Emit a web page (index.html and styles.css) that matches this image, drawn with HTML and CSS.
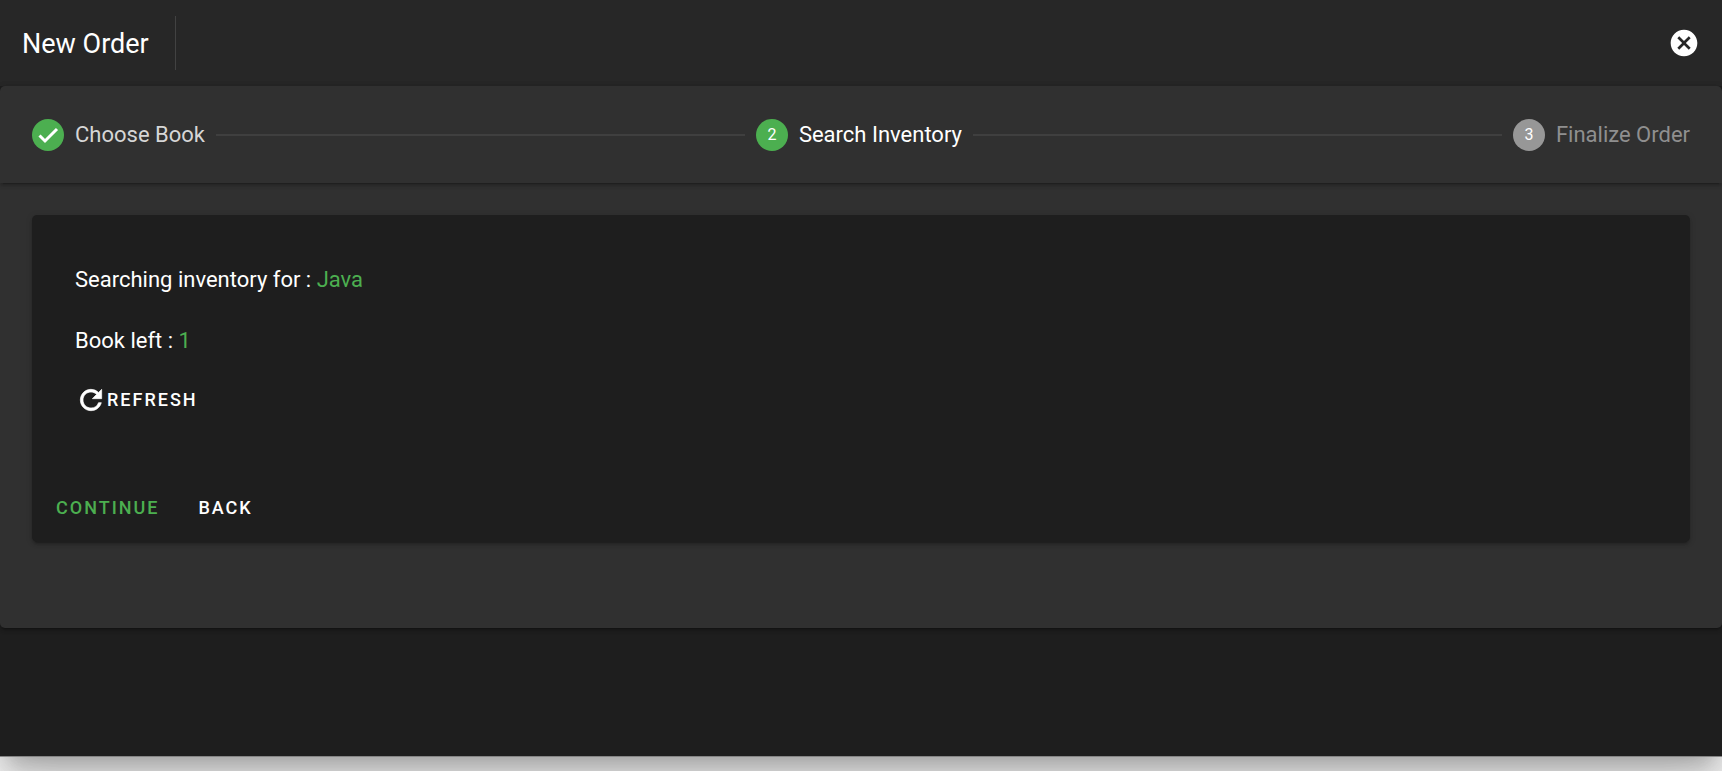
FILE: index.html
```html
<!DOCTYPE html>
<html lang="en">
<head>
<meta charset="utf-8">
<meta name="viewport" content="width=device-width, initial-scale=1">
<title>New Order</title>
<link rel="stylesheet" href="styles.css">
</head>
<body>
<div class="page">
<main class="dialog">
  <header class="toolbar">
    <h1 class="toolbar-title">New Order</h1>
    <span class="toolbar-divider"></span>
    <button class="close-button" type="button" aria-label="Close">
      <svg class="icon" viewBox="0 0 24 24" aria-hidden="true"><path d="M12 2C6.470 2 2 6.470 2 12s4.470 10 10 10 10-4.470 10-10S17.530 2 12 2zm5 13.590L15.590 17 12 13.410 8.410 17 7 15.590 10.590 12 7 8.410 8.410 7 12 10.590 15.590 7 17 8.410 13.410 12 17 15.590z"/></svg>
    </button>
  </header>
  <section class="stepper">
    <ol class="steps">
      <li class="step step-complete">
        <span class="step-badge"><svg class="check" viewBox="0 0 24 24" aria-hidden="true"><path d="M3.500 12.500l5.500 5.500L21 6"/></svg></span>
        <span>Choose Book</span>
      </li>
      <li class="step-line" role="presentation"></li>
      <li class="step step-active" aria-current="step">
        <span class="step-badge">2</span>
        <span>Search Inventory</span>
      </li>
      <li class="step-line" role="presentation"></li>
      <li class="step step-pending">
        <span class="step-badge">3</span>
        <span>Finalize Order</span>
      </li>
    </ol>
    <div class="step-content">
      <article class="card">
        <div class="card-body">
          <p class="card-line">Searching inventory for : <span class="value">Java</span></p>
          <p class="card-line">Book left : <span class="value">1</span></p>
          <button class="text-button refresh-button" type="button">
            <svg class="icon refresh-icon" viewBox="0 0 24 24" aria-hidden="true"><path d="M17.650 6.350A7.958 7.958 0 0 0 12 4c-4.420 0-7.990 3.580-7.990 8s3.570 8 7.990 8c3.730 0 6.840-2.550 7.730-6h-2.080A5.990 5.990 0 0 1 12 18c-3.310 0-6-2.690-6-6s2.690-6 6-6c1.660 0 3.140.690 4.220 1.780L13 11h7V4l-2.350 2.350z"/></svg>
            REFRESH
          </button>
        </div>
        <div class="card-actions">
          <button class="text-button continue-button" type="button">CONTINUE</button>
          <button class="text-button" type="button">BACK</button>
        </div>
      </article>
    </div>
  </section>
</main>
</div>
</body>
</html>
```

FILE: styles.css
```css
* {
  box-sizing: border-box;
}

body {
  margin: 0;
  background: #fff;
  color: #fff;
  font-family: Roboto, "Liberation Sans", sans-serif;
  font-size: 22px;
  line-height: 32px;
}

button {
  margin: 0;
  padding: 0;
  border: 0;
  background: none;
  color: inherit;
  font: inherit;
  cursor: pointer;
}

.page {
  display: flex;
  flex-direction: column;
  min-height: 100vh;
  padding-bottom: 14px;
  background: #fff;
  overflow: hidden;
}

.dialog {
  flex: 1;
  border-bottom: 1px solid #858585;
  background: #1e1e1e;
  box-shadow: 0 15px 20px -9px rgba(0, 0, 0, 0.2), 0 32px 51px 4px rgba(0, 0, 0, 0.14), 0 12px 62px 11px rgba(0, 0, 0, 0.12);
}

.toolbar {
  display: flex;
  align-items: center;
  height: 86px;
  padding: 0 22px;
  background: #272727;
}

.toolbar-title {
  margin: 0;
  padding-top: 2px;
  font-size: 27px;
  font-weight: 400;
}

.toolbar-divider {
  width: 1px;
  height: 54px;
  margin-left: 26px;
  background: #424242;
}

.close-button {
  display: flex;
  margin-left: auto;
}

.icon {
  width: 32px;
  height: 32px;
  fill: currentColor;
}

.refresh-icon {
  stroke: currentColor;
  stroke-width: 0.500;
}

.stepper {
  border-radius: 5px;
  background: #303030;
  box-shadow: 0 4px 1px -3px rgba(0, 0, 0, 0.2), 0 3px 3px 0 rgba(0, 0, 0, 0.14), 0 1px 7px 0 rgba(0, 0, 0, 0.12);
}

.steps {
  display: flex;
  align-items: center;
  height: 97px;
  margin: 0;
  padding: 0 32px;
  gap: 11px;
  list-style: none;
  border-radius: 5px 5px 0 0;
  box-shadow: 0 4px 1px -3px rgba(0, 0, 0, 0.2), 0 3px 3px 0 rgba(0, 0, 0, 0.14), 0 1px 7px 0 rgba(0, 0, 0, 0.12);
}

.step {
  display: flex;
  align-items: center;
  gap: 11px;
}

.step-complete {
  color: #d6d6d6;
}

.step-pending {
  color: #8f8f8f;
}

.step-badge {
  display: flex;
  align-items: center;
  justify-content: center;
  width: 32px;
  height: 32px;
  border-radius: 50%;
  background: #4caf50;
  color: #fff;
  font-size: 16px;
}

.step-pending .step-badge {
  background: #979797;
}

.check {
  width: 24px;
  height: 24px;
  fill: none;
  stroke: currentColor;
  stroke-width: 3;
}

.step-line {
  flex: 1;
  height: 2px;
  background: #3f3f3f;
}

.step-content {
  padding: 32px 32px 86px;
}

.card {
  border-radius: 5px;
  background: #1e1e1e;
  box-shadow: 0 4px 1px -3px rgba(0, 0, 0, 0.2), 0 3px 3px 0 rgba(0, 0, 0, 0.14), 0 1px 7px 0 rgba(0, 0, 0, 0.12);
}

.card-body {
  padding: 49px 43px 60px;
}

.card-line {
  margin: 0 0 29px;
}

.text-button {
  display: flex;
  align-items: center;
  height: 48px;
  font-size: 18px;
  font-weight: 500;
  letter-spacing: 2px;
}

.refresh-button {
  margin-top: -10px;
}

.card-actions {
  display: flex;
  gap: 39px;
  padding: 0 24px 10px;
}

.continue-button {
  color: #4caf50;
}

.value {
  color: #4caf50;
}
```
